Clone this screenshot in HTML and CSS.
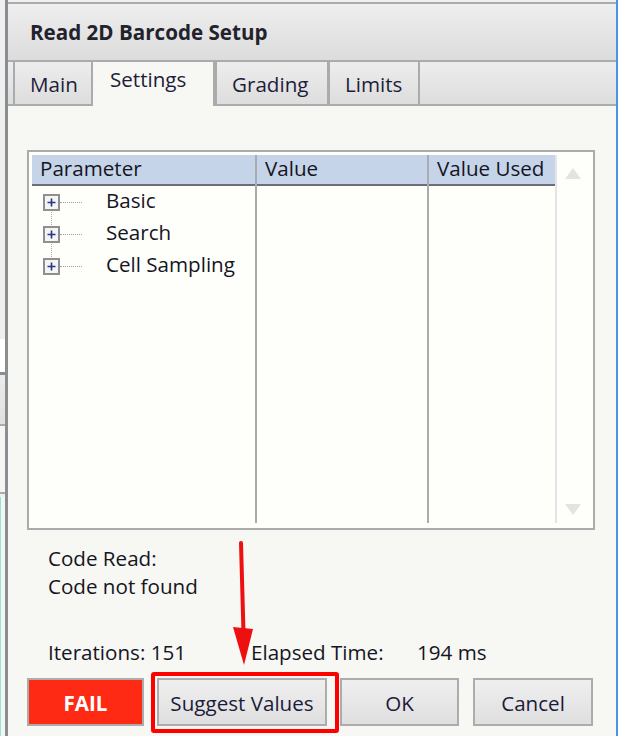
FILE: index.html
```html
<!DOCTYPE html>
<html>
<head>
    <title>Read 2D Barcode Setup</title>
    <link rel="stylesheet" href="styles.css">
</head>
<body>
    <div class="screen">
        <!-- edge of the window behind the dialog -->
        <div class="behind">
            <div class="bh bh-top"></div>
            <div class="bh bh-white"></div>
            <div class="bh bh-dark"></div>
            <div class="bh bh-gray"></div>
            <div class="bh bh-line"></div>
            <div class="bh bh-light"></div>
            <div class="bh bh-line"></div>
            <div class="bh bh-rest"></div>
        </div>

        <div class="dialog">
            <div class="titlebar">Read 2D Barcode Setup</div>

            <div class="tabs">
                <div class="tab tab-main">Main</div>
                <div class="tab tab-settings active">Settings</div>
                <div class="tab tab-grading">Grading</div>
                <div class="tab tab-limits">Limits</div>
            </div>

            <div class="panel">
                <div class="grid-box">
                    <div class="cols">
                        <div class="col col-param">
                            <div class="col-head">Parameter</div>
                            <div class="tree">
                                <div class="node">
                                    <svg class="expander" width="17" height="17" viewBox="0 0 17 17"><rect x="1" y="1" width="15" height="15" fill="#f4f4f4" stroke="#8f8f8f" stroke-width="2"/><path d="M4.5 8.5h8M8.5 4.5v8" stroke="#24358a" stroke-width="1.6"/></svg>
                                    <span class="dots"></span>
                                    <span class="node-label">Basic</span>
                                </div>
                                <div class="node">
                                    <svg class="expander" width="17" height="17" viewBox="0 0 17 17"><rect x="1" y="1" width="15" height="15" fill="#f4f4f4" stroke="#8f8f8f" stroke-width="2"/><path d="M4.5 8.5h8M8.5 4.5v8" stroke="#24358a" stroke-width="1.6"/></svg>
                                    <span class="dots"></span>
                                    <span class="node-label">Search</span>
                                </div>
                                <div class="node">
                                    <svg class="expander" width="17" height="17" viewBox="0 0 17 17"><rect x="1" y="1" width="15" height="15" fill="#f4f4f4" stroke="#8f8f8f" stroke-width="2"/><path d="M4.5 8.5h8M8.5 4.5v8" stroke="#24358a" stroke-width="1.6"/></svg>
                                    <span class="dots"></span>
                                    <span class="node-label">Cell Sampling</span>
                                </div>
                            </div>
                        </div>
                        <div class="col col-value">
                            <div class="col-head">Value</div>
                        </div>
                        <div class="col col-used">
                            <div class="col-head">Value Used</div>
                        </div>
                    </div>
                    <div class="scrollbar">
                        <svg width="16" height="11" viewBox="0 0 16 11"><path d="M8 0L16 11H0z" fill="#e3e3e3"/></svg>
                        <svg width="16" height="11" viewBox="0 0 16 11"><path d="M0 0H16L8 11z" fill="#e3e3e3"/></svg>
                    </div>
                </div>

                <div class="status">
                    <div>Code Read:</div>
                    <div>Code not found</div>
                </div>

                <div class="stats">
                    <span class="stat-iter">Iterations: 151</span>
                    <span class="stat-time">Elapsed Time:</span>
                    <span>194 ms</span>
                </div>

                <div class="buttons">
                    <div class="btn btn-fail">FAIL</div>
                    <div class="btn btn-suggest">Suggest Values</div>
                    <div class="btn btn-ok">OK</div>
                    <div class="btn btn-cancel">Cancel</div>
                </div>
            </div>
        </div>

        <!-- red annotation drawn over the dialog -->
        <svg class="arrow" width="30" height="130" viewBox="0 0 30 130">
            <path d="M9 2L11.5 92" stroke="#ee1010" stroke-width="4" stroke-linecap="round" fill="none"/>
            <path d="M1 86L21 88L12 124z" fill="#ee1010"/>
        </svg>
        <div class="highlight"></div>
    </div>
</body>
</html>
```

FILE: styles.css
```css
body {
    margin: 0;
    font-family: "Open Sans", "Noto Sans", sans-serif;
    font-size: 20.6px;
    color: #15151f;
}

.screen {
    position: relative;
    display: flex;
    width: 618px;
    height: 736px;
    overflow: hidden;
    background: #f0f0f0;
}

/* window behind */
.behind {
    width: 5px;
    display: flex;
    flex-direction: column;
}

.bh-top { height: 339px; background: #efefef; }
.bh-white { height: 33px; background: #ffffff; }
.bh-dark { height: 3px; background: #8a8d91; }
.bh-gray { height: 49px; background: linear-gradient(#ececec, #e0e0e0); }
.bh-line { height: 2px; background: #a9abad; }
.bh-light { height: 66px; background: #f5f5f3; }
.bh-rest {
    flex: 1;
    background: #f5f5f3;
    border-left: 1px solid #8fe6d2;
    margin-top: 3px;
}

/* dialog */
.dialog {
    flex: 1;
    display: flex;
    flex-direction: column;
    border-left: 3px solid #8a8d91;
    border-right: 2px solid #4a94e4;
    padding-top: 2px;
}

.titlebar {
    height: 56px;
    line-height: 56px;
    padding-left: 22px;
    border-top: 2px solid #a9abad;
    border-bottom: 2px solid #a9abad;
    background: linear-gradient(#eeeeee, #dcdcdc);
    font-weight: bold;
    color: #22222c;
}

.tabs {
    display: flex;
    height: 42px;
    border-bottom: 2px solid #a9abad;
    background: linear-gradient(#ededed, #dddddd);
}

.tab {
    box-sizing: border-box;
    height: 42px;
    line-height: 44px;
    padding-left: 15px;
    border-right: 2px solid #a9abad;
    color: #1d1d3a;
}

.tab-main {
    width: 80px;
    margin-left: 5px;
    border-left: 2px solid #a9abad;
}

.tab-settings { width: 122px; }
.tab-grading { width: 114px; border-left: 2px solid #a9abad; }
.tab-limits { width: 91px; border-left: 1px solid #a9abad; }

.tab.active {
    height: 44px;
    line-height: 34px;
    padding-left: 17px;
    padding-bottom: 10px;
    margin-bottom: -2px;
    background: #f7f7f3;
}

.panel {
    flex: 1;
    background: #f7f7f3;
    padding: 44px 21px 0 19px;
}

/* parameter grid */
.grid-box {
    display: flex;
    box-sizing: border-box;
    height: 380px;
    border: 2px solid #a9abad;
    background: #fefefb;
    padding: 3px 0 5px 3px;
}

.cols {
    display: flex;
}

.col {
    display: flex;
    flex-direction: column;
}

.col-param { width: 223px; border-right: 2px solid #a9abad; }
.col-value { width: 170px; border-right: 2px solid #a9abad; }
.col-used { width: 126px; border-right: 2px solid #e4e4e8; }

.col-head {
    height: 29px;
    line-height: 26px;
    padding-left: 8px;
    background: #c5d4e9;
    border-bottom: 2px solid #6b6f77;
}

.tree {
    background: repeating-linear-gradient(to bottom, #a8a8a8 0 1px, transparent 1px 2px) no-repeat 19px 16px / 1px 64px;
}

.node {
    display: flex;
    align-items: center;
    height: 32px;
}

.expander {
    margin-left: 11px;
    flex: none;
}

.dots {
    width: 22px;
    border-top: 1px dotted #a0a0a0;
    margin-right: 24px;
}

.node-label {
    line-height: 30px;
    margin-bottom: 4px;
}

.scrollbar {
    flex: 1;
    display: flex;
    flex-direction: column;
    justify-content: space-between;
    align-items: center;
    padding: 13px 4px 8px 0;
}

/* result text */
.status {
    margin: 14px 0 0 21px;
    line-height: 28px;
}

.stats {
    display: flex;
    margin: 38px 0 0 21px;
    line-height: 28px;
}

.stat-iter { width: 203px; }
.stat-time { width: 166px; }

.buttons {
    display: flex;
    margin-top: 12px;
}

.btn {
    box-sizing: border-box;
    height: 48px;
    line-height: 47px;
    text-align: center;
    border: 2px solid #acacac;
    background: linear-gradient(#efefef, #dfdfdf);
    color: #1b1b3a;
}

.btn-fail {
    width: 117px;
    background: #ff2a14;
    color: #ffffff;
    font-weight: bold;
}

.btn-suggest { width: 170px; margin-left: 13px; }
.btn-ok { width: 119px; margin-left: 13px; }
.btn-cancel { width: 120px; margin-left: 14px; }

/* annotation */
.arrow {
    position: absolute;
    left: 232px;
    top: 541px;
}

.highlight {
    position: absolute;
    left: 151px;
    top: 672px;
    width: 188px;
    height: 61px;
    box-sizing: border-box;
    border: 4px solid #ff0000;
    border-radius: 3px;
}
```
